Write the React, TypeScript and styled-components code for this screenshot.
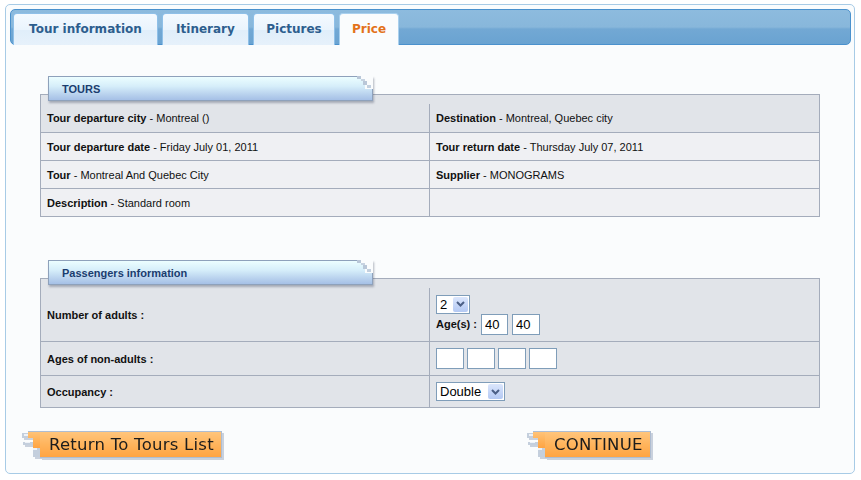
import React from "react";
import styled, { createGlobalStyle } from "styled-components";

const Global = createGlobalStyle`
  html, body { margin: 0; padding: 0; background: #ffffff; }
  body { font-family: "Liberation Sans", Arial, sans-serif; }
`;

const Frame = styled.div`
  margin: 4px 0 0 5px;
  width: 850px;
  height: 470px;
  box-sizing: border-box;
  border: 1px solid #a7cbe6;
  border-radius: 5px;
  background: #fafcfd;
  padding: 4px 3px 4px 4px;
  display: flex;
  flex-direction: column;
`;

const TabBar = styled.div`
  height: 36px;
  box-sizing: border-box;
  border: 1px solid #4a91cd;
  border-radius: 5px;
  background: linear-gradient(to bottom, #8dbbde 0%, #88b7db 50%, #72a8d4 56%, #6aa3d1 100%);
  display: flex;
  align-items: flex-end;
  gap: 4px;
  padding-left: 2px;
`;

const Tab = styled.div<{ $active?: boolean; $w: number }>`
  width: ${(p) => p.$w}px;
  height: 32px;
  margin-bottom: -1px;
  box-sizing: border-box;
  padding-bottom: 2px;
  display: flex;
  align-items: center;
  justify-content: center;
  border: 1px solid ${(p) => (p.$active ? "#a9d0ee" : "#8fc0e8")};
  border-bottom: none;
  border-radius: 4px 4px 0 0;
  background: ${(p) =>
    p.$active
      ? "#fafcfd"
      : "linear-gradient(to bottom, #f4faff 0%, #eaf4fd 50%, #e0eefa 52%, #e6f1fb 100%)"};
  color: ${(p) => (p.$active ? "#e3721a" : "#2d5e8e")};
  font-family: "DejaVu Sans", Verdana, sans-serif;
  font-weight: bold;
  font-size: 12px;
  white-space: nowrap;
`;

const Content = styled.div`
  display: flex;
  flex-direction: column;
  padding-left: 30px;
`;

const Section = styled.div<{ $top: number }>`
  margin-top: ${(p) => p.$top}px;
  display: flex;
  flex-direction: column;
`;

const SectionHeader = styled.div`
  position: relative;
  z-index: 1;
  margin-left: 8px;
  margin-bottom: -7px;
  width: 325px;
  height: 25px;
  box-sizing: border-box;
  border: 1px solid #8ea1bb;
  background: linear-gradient(to bottom, #ecfeff 0%, #d6eefa 40%, #b9d2ee 75%, #a5c0e6 100%);
  box-shadow: 1px 2px 2px rgba(90, 100, 120, 0.45);
  padding-left: 13px;
  line-height: 24px;
  font-family: "Liberation Sans", Arial, sans-serif;
  font-weight: bold;
  font-size: 11px;
  color: #1b3d6f;
`;

const Torn = styled.svg`
  position: absolute;
  top: -1px;
  right: -1px;
`;

const Table = styled.div`
  width: 780px;
  box-sizing: border-box;
  border: 1px solid #a4acbb;
  background: #e1e4e9;
`;

const Spacer = styled.div`
  height: 9px;
`;

const Row = styled.div<{ $h: number; $first?: boolean; $light?: boolean }>`
  display: grid;
  grid-template-columns: 388px 1fr;
  height: ${(p) => p.$h}px;
  box-sizing: border-box;
  border-top: ${(p) => (p.$first ? "none" : "1px solid #a4acbb")};
  background: ${(p) => (p.$light ? "#eff0f3" : "#e1e4e9")};
`;

const Cell = styled.div<{ $right?: boolean }>`
  display: flex;
  flex-direction: column;
  justify-content: center;
  padding: 0 6px;
  border-left: ${(p) => (p.$right ? "1px solid #a4acbb" : "none")};
  font-size: 11px;
  color: #111;
`;

const Line = styled.div<{ $gap?: number }>`
  display: flex;
  align-items: center;
  gap: ${(p) => p.$gap ?? 4}px;
`;

const B = styled.b`
  font-weight: bold;
`;

const SelectBox = styled.div<{ $w: number }>`
  display: inline-flex;
  align-items: center;
  justify-content: space-between;
  width: ${(p) => p.$w}px;
  height: 19px;
  box-sizing: border-box;
  border: 1px solid #7f9db9;
  background: #fff;
  padding-left: 3px;
  font-size: 13px;
  color: #000;
`;

const SelectArrow = styled.span`
  width: 15px;
  height: 15px;
  margin-right: 1px;
  border-radius: 2px;
  background: linear-gradient(to bottom, #dbe6fc 0%, #c3d4f7 60%, #b4c9f3 100%);
  display: flex;
  align-items: center;
  justify-content: center;
`;

const Input = styled.input<{ $w: number }>`
  width: ${(p) => p.$w}px;
  height: 21px;
  box-sizing: border-box;
  border: 1px solid #7f9db9;
  background: #fff;
  padding: 0 3px;
  margin: 0;
  font-family: "Liberation Sans", Arial, sans-serif;
  font-size: 13px;
  color: #000;
  outline: none;
`;

const Buttons = styled.div`
  margin-top: 23px;
  display: grid;
  grid-template-columns: 505px auto;
  padding-left: 12px;
  justify-content: start;
`;

const Btn = styled.div`
  display: inline-flex;
  height: 27px;
  width: max-content;
  filter: drop-shadow(2px 2px 0 #c9d1dd);
`;

const BtnBody = styled.span`
  display: flex;
  align-items: center;
  height: 27px;
  box-sizing: border-box;
  border: 1px solid #aebdd2;
  border-left: none;
  background: linear-gradient(to bottom, #ffc57c 0%, #ffb45c 50%, #ffa443 100%);
  padding: 0 7px 0 9px;
  font-family: "DejaVu Sans", Verdana, sans-serif;
  font-size: 16.5px;
  color: #1c1c1c;
  letter-spacing: 0.25px;
`;

const Chevron = () => (
  <svg width="9" height="6" viewBox="0 0 9 6">
    <path d="M1 1 L4.5 4.5 L8 1" fill="none" stroke="#4b5f86" strokeWidth="2" />
  </svg>
);

const Select = ({ value, w }: { value: string; w: number }) => (
  <SelectBox $w={w}>
    <span>{value}</span>
    <SelectArrow>
      <Chevron />
    </SelectArrow>
  </SelectBox>
);

const TornCorner = () => (
  <Torn width="16" height="13" viewBox="0 0 16 13">
    <rect x="8" y="0" width="8" height="13" fill="#fafcfd" />
    <rect x="4" y="0" width="4" height="5" fill="#fafcfd" />
    <rect x="0" y="0" width="4" height="3" fill="#b9c7d8" />
    <rect x="4" y="3" width="4" height="2" fill="#c7d3e1" />
    <rect x="6" y="5" width="4" height="4" fill="#b9c7d8" />
    <rect x="10" y="9" width="4" height="3" fill="#c3d0df" />
  </Torn>
);

const BtnDeco = () => (
  <svg width="18" height="27" viewBox="0 0 18 27">
    <defs>
      <linearGradient id="og" x1="0" y1="0" x2="0" y2="1">
        <stop offset="0" stopColor="#ffc57c" />
        <stop offset="0.5" stopColor="#ffb45c" />
        <stop offset="1" stopColor="#ffa443" />
      </linearGradient>
    </defs>
    <path d="M6 0 H18 V17 H11 V7 H6 Z" fill="url(#og)" />
    <path d="M6 0.5 H18" stroke="#aebdd2" strokeWidth="1" />
    <rect x="0" y="2" width="6" height="5" fill="#c4cfdd" />
    <rect x="2" y="3" width="4" height="2" fill="#eef2f7" />
    <rect x="1" y="11" width="10" height="3" fill="#c4cfdd" />
    <rect x="3" y="11" width="5" height="1" fill="#eef2f7" />
    <rect x="11" y="17" width="7" height="9" fill="#c4cfdd" />
    <rect x="11" y="17" width="4" height="2" fill="#eef2f7" />
  </svg>
);

const Button = ({ label }: { label: string }) => (
  <Btn>
    <BtnDeco />
    <BtnBody>{label}</BtnBody>
  </Btn>
);

export default function App() {
  return (
    <>
      <Global />
      <Frame>
        <TabBar>
          <Tab $w={145}>Tour information</Tab>
          <Tab $w={87}>Itinerary</Tab>
          <Tab $w={82}>Pictures</Tab>
          <Tab $w={60} $active>
            Price
          </Tab>
        </TabBar>
        <Content>
          <Section $top={31}>
            <SectionHeader>
              TOURS
              <TornCorner />
            </SectionHeader>
            <Table>
              <Spacer />
              <Row $h={28} $first>
                <Cell>
                  <span>
                    <B>Tour departure city</B> - Montreal ()
                  </span>
                </Cell>
                <Cell $right>
                  <span>
                    <B>Destination</B> - Montreal, Quebec city
                  </span>
                </Cell>
              </Row>
              <Row $h={28} $light>
                <Cell>
                  <span>
                    <B>Tour departure date</B> - Friday July 01, 2011
                  </span>
                </Cell>
                <Cell $right>
                  <span>
                    <B>Tour return date</B> - Thursday July 07, 2011
                  </span>
                </Cell>
              </Row>
              <Row $h={28} $light>
                <Cell>
                  <span>
                    <B>Tour</B> - Montreal And Quebec City
                  </span>
                </Cell>
                <Cell $right>
                  <span>
                    <B>Supplier</B> - MONOGRAMS
                  </span>
                </Cell>
              </Row>
              <Row $h={28} $light>
                <Cell>
                  <span>
                    <B>Description</B> - Standard room
                  </span>
                </Cell>
                <Cell $right />
              </Row>
            </Table>
          </Section>

          <Section $top={43}>
            <SectionHeader>
              Passengers information
              <TornCorner />
            </SectionHeader>
            <Table>
              <Spacer />
              <Row $h={53} $first>
                <Cell>
                  <B>Number of adults :</B>
                </Cell>
                <Cell $right>
                  <Line>
                    <Select value="2" w={34} />
                  </Line>
                  <Line>
                    <B>Age(s) :</B>
                    <Input $w={27} defaultValue="40" />
                    <Input $w={28} defaultValue="40" />
                  </Line>
                </Cell>
              </Row>
              <Row $h={34}>
                <Cell>
                  <B>Ages of non-adults :</B>
                </Cell>
                <Cell $right>
                  <Line $gap={3}>
                    <Input $w={28} />
                    <Input $w={28} />
                    <Input $w={28} />
                    <Input $w={28} />
                  </Line>
                </Cell>
              </Row>
              <Row $h={32}>
                <Cell>
                  <B>Occupancy :</B>
                </Cell>
                <Cell $right>
                  <Line>
                    <Select value="Double" w={69} />
                  </Line>
                </Cell>
              </Row>
            </Table>
          </Section>
        </Content>
        <Buttons>
          <Button label="Return To Tours List" />
          <Button label="CONTINUE" />
        </Buttons>
      </Frame>
    </>
  );
}
